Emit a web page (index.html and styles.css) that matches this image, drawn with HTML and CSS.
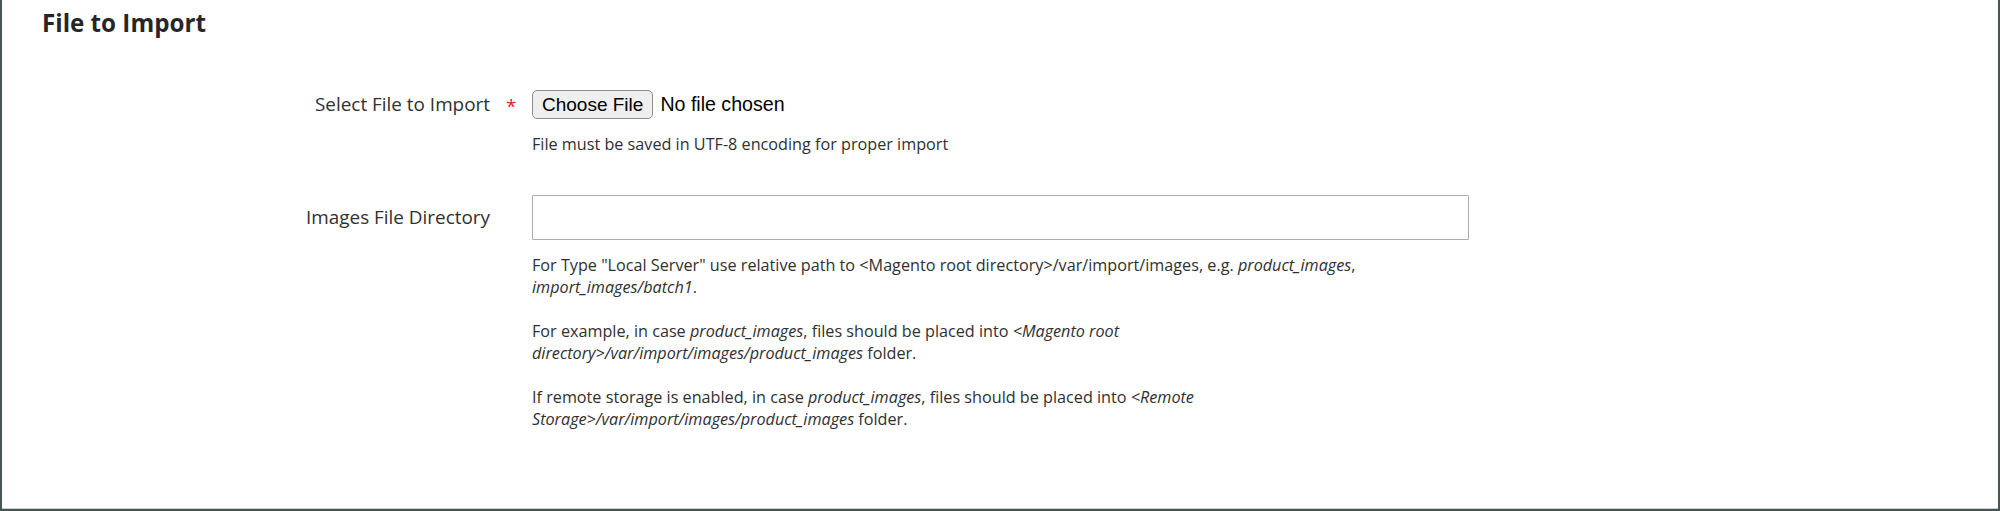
FILE: index.html
```html
<!DOCTYPE html>
<html lang="en">
<head>
<meta charset="utf-8">
<title>File to Import</title>
<link rel="stylesheet" href="styles.css">
</head>
<body>
<div class="frame">
  <fieldset class="fieldset">
    <legend class="legend">File to Import</legend>

    <div class="field">
      <label class="label" for="import_file">Select File to Import</label>
      <span class="req">*</span>
      <div class="control">
        <input class="file" type="file" id="import_file">
        <div class="note note-first">File must be saved in UTF-8 encoding for proper import</div>
      </div>
    </div>

    <div class="field field-dir">
      <label class="label label-tall" for="images_dir">Images File Directory</label>
      <span class="req"></span>
      <div class="control">
        <input class="text" type="text" id="images_dir">
        <div class="note note-dir">For Type "Local Server" use relative path to &lt;Magento root directory&gt;/var/import/images, e.g. <i>product_images</i>, <i>import_images/batch1</i>.<br><br>For example, in case <i>product_images</i>, files should be placed into <i>&lt;Magento root directory&gt;/var/import/images/product_images</i> folder.<br><br>If remote storage is enabled, in case <i>product_images</i>, files should be placed into <i>&lt;Remote Storage&gt;/var/import/images/product_images</i> folder.</div>
      </div>
    </div>
  </fieldset>
</div>
</body>
</html>
```

FILE: styles.css
```css
* { box-sizing: border-box; }

html, body {
  margin: 0;
  padding: 0;
  background: #ffffff;
}

.frame {
  width: 2000px;
  height: 511px;
  border-left: 2px solid #485555;
  border-right: 2px solid #485555;
  border-bottom: 2px solid #485555;
  box-shadow: inset 0 -1px 0 #c9cfd1;
  background: #ffffff;
  font-family: "Open Sans", "Liberation Sans", sans-serif;
  color: #303030;
  overflow: hidden;
}

.fieldset {
  border: 0;
  margin: 0;
  padding: 0;
  min-width: 0;
}

.legend {
  display: block;
  float: left;
  width: 100%;
  padding: 0 0 0 40px;
  margin: 6px 0 50px 0;
  font-size: 24.2px;
  line-height: 34px;
  font-weight: 700;
  color: #262626;
}

.field {
  clear: both;
  display: grid;
  grid-template-columns: 488px 42px 937px;
  align-items: start;
}

.field-dir {
  margin-top: 40px;
}

.label {
  text-align: right;
  font-size: 18.9px;
  line-height: 29px;
  color: #303030;
}

.label-tall {
  line-height: 44px;
}

.req {
  color: #e22626;
  font-size: 19px;
  line-height: 29px;
  padding-left: 16px;
  padding-top: 2px;
}

.control {
  display: flex;
  flex-direction: column;
}

.file {
  display: block;
  height: 29px;
  font-family: "Liberation Sans", Arial, sans-serif;
  font-size: 19.6px;
  color: #000000;
  padding: 0;
  margin: 0;
}

.file::file-selector-button {
  height: 29px;
  margin: 0 7px 0 0;
  padding: 0 9px;
  border: 1px solid #8d8d8d;
  border-radius: 5px;
  background: #efefef;
  font-family: "Liberation Sans", Arial, sans-serif;
  font-size: 19px;
  color: #000000;
}

.text {
  display: block;
  width: 937px;
  height: 45px;
  border: 1px solid #adadad;
  border-radius: 1px;
  background: #ffffff;
  margin: 0;
  padding: 0 12px;
  font-family: "Open Sans", sans-serif;
  font-size: 19.6px;
}

.note {
  font-size: 16.2px;
  line-height: 22px;
  color: #303030;
}

.note-first {
  margin-top: 14px;
}

.note-dir {
  margin-top: 14px;
  max-width: 880px;
}
```
